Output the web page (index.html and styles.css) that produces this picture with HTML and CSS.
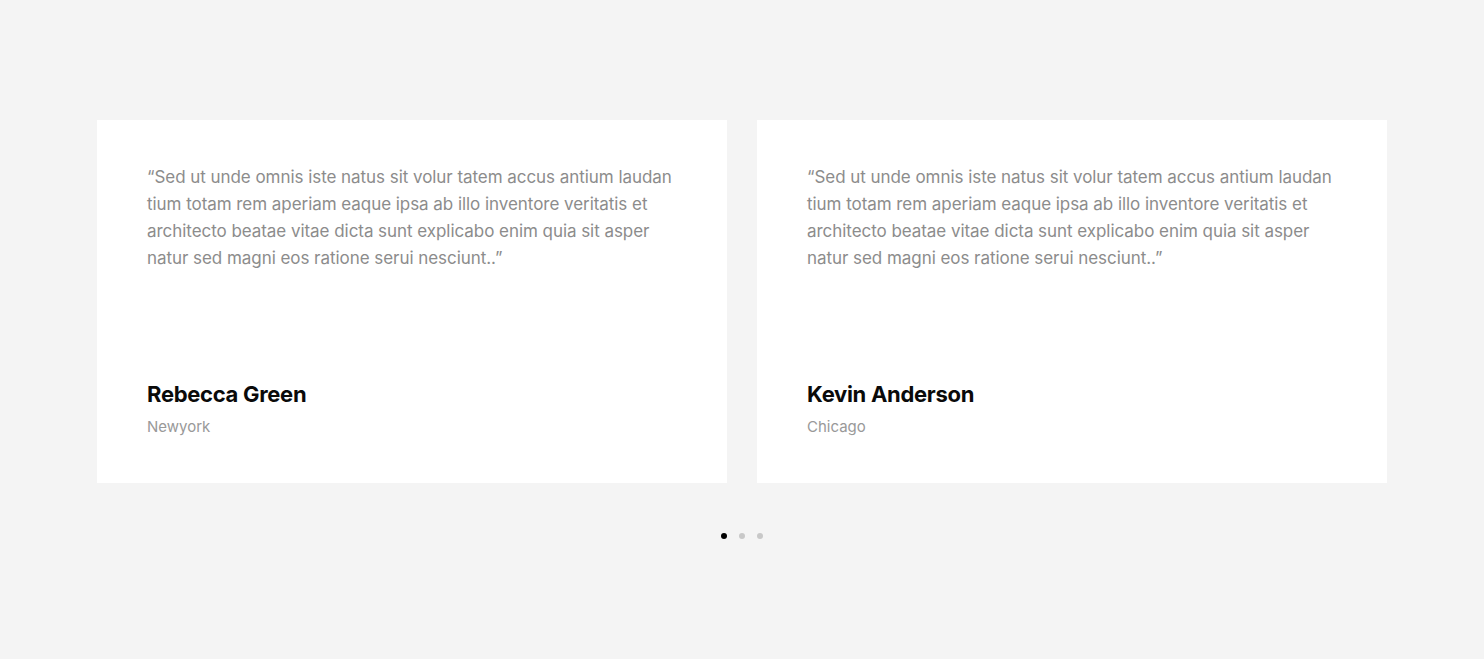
FILE: index.html
```html
<!DOCTYPE html>
<html lang="en">
<head>
<meta charset="utf-8">
<title>Testimonials</title>
<link rel="stylesheet" href="styles.css">
</head>
<body>
<section class="testimonials">
  <div class="cards">
    <article class="card">
      <p class="quote">“Sed ut unde omnis iste natus sit volur tatem accus antium laudan tium totam rem aperiam eaque ipsa ab illo inventore veritatis et architecto beatae vitae dicta sunt explicabo enim quia sit asper natur sed magni eos ratione serui nesciunt..”</p>
      <h3 class="name">Rebecca Green</h3>
      <p class="place">Newyork</p>
    </article>
    <article class="card">
      <p class="quote">“Sed ut unde omnis iste natus sit volur tatem accus antium laudan tium totam rem aperiam eaque ipsa ab illo inventore veritatis et architecto beatae vitae dicta sunt explicabo enim quia sit asper natur sed magni eos ratione serui nesciunt..”</p>
      <h3 class="name">Kevin Anderson</h3>
      <p class="place">Chicago</p>
    </article>
  </div>
  <div class="dots">
    <span class="dot active"></span>
    <span class="dot"></span>
    <span class="dot"></span>
  </div>
</section>
</body>
</html>
```
FILE: styles.css
```css
* { box-sizing: border-box; }
html, body { margin: 0; padding: 0; }
body {
  background: #f4f4f4;
  font-family: "Inter", "Noto Sans", sans-serif;
  width: 1484px;
  height: 659px;
  overflow: hidden;
}
.testimonials {
  padding-top: 120px;
  display: flex;
  flex-direction: column;
  align-items: center;
}
.cards {
  width: 1290px;
  display: grid;
  grid-template-columns: 1fr 1fr;
  gap: 30px;
}
.card {
  background: #fff;
  height: 363px;
  padding: 44px 50px 44px;
}
.quote {
  margin: 0 0 107px;
  font-size: 17px;
  line-height: 27px;
  color: #8c8c8c;
  letter-spacing: -0.05px;
  max-width: 532px;
}
.name {
  margin: 0;
  font-size: 22px;
  line-height: 30px;
  font-weight: 700;
  color: #0a0a0a;
  letter-spacing: -0.3px;
}
.place {
  margin: 6px 0 0;
  font-size: 15px;
  line-height: 24px;
  color: #999;
}
.dots {
  margin-top: 50px;
  display: flex;
  gap: 12px;
  height: 6px;
}
.dot {
  width: 6px;
  height: 6px;
  border-radius: 50%;
  background: #c8c8c8;
}
.dot.active { background: #000; }
```
